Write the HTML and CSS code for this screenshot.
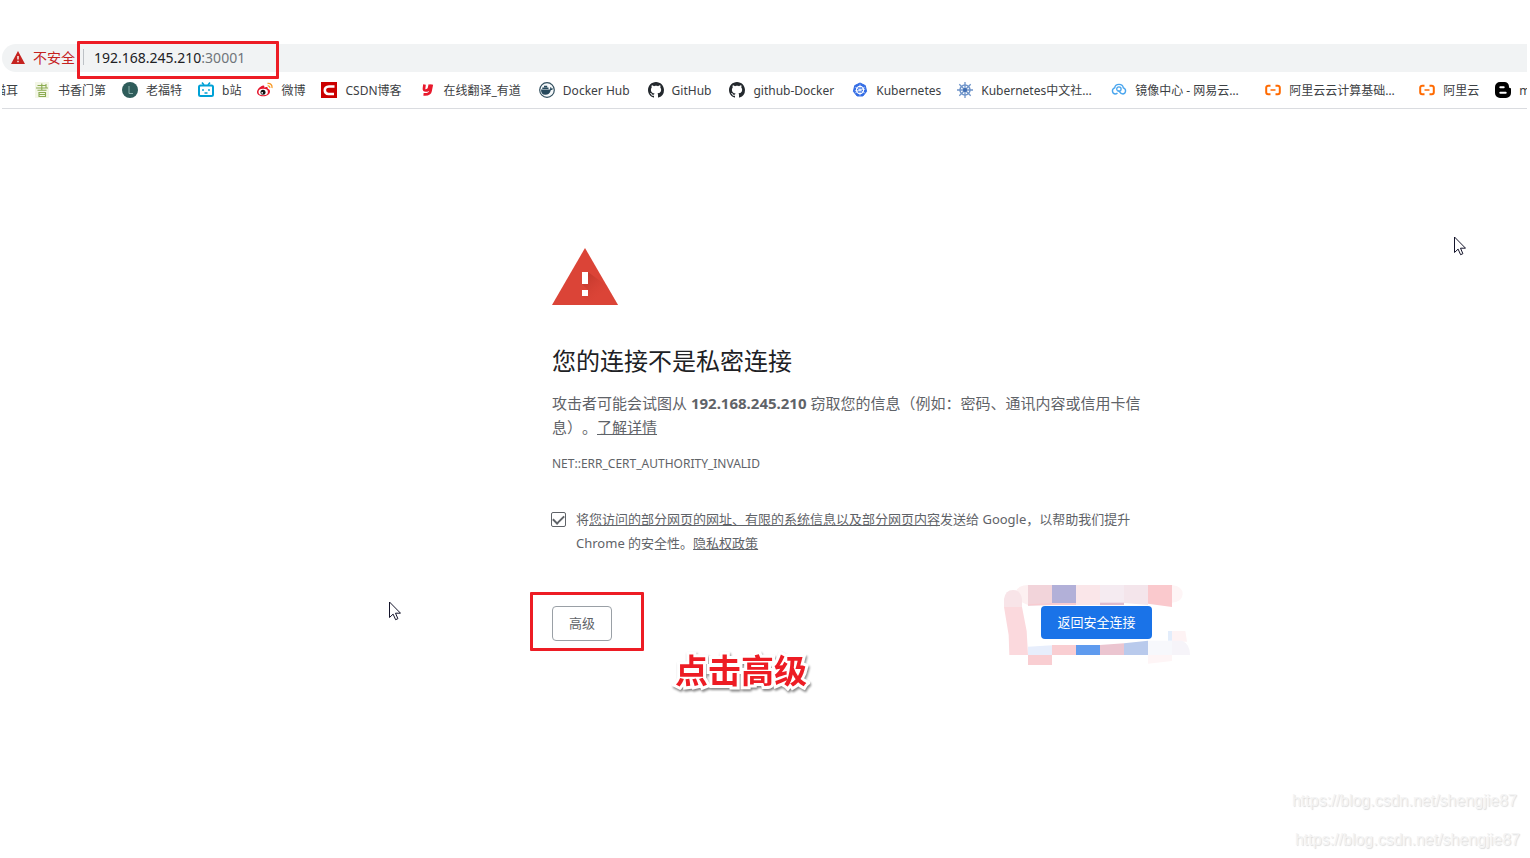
FILE: index.html
```html
<!DOCTYPE html>
<html lang="zh-CN">
<head>
  <meta charset="UTF-8">
  <meta name="viewport" content="width=device-width, initial-scale=1.0">
  <title>隐私设置错误</title>
  <link rel="stylesheet" href="styles.css">
</head>
<body>
  <header class="browser">
    <div class="omnibox">
      <svg class="warn" viewBox="0 0 14 13" width="14" height="13"><path d="M7 0L14 13H0z" fill="#c5221f"/><path d="M6.3 5h1.4v3.6H6.3zM6.3 9.8h1.4v1.4H6.3z" fill="#fff"/></svg>
      <span class="insecure">不安全</span>
      <span class="divider"></span>
      <span class="url">192.168.245.210<span class="port">:30001</span></span>
      <div class="mark mark-url"></div>
    </div>

    <nav class="bookmarks">
      <a href="#" class="bookmark first">猫耳</a>
      <a href="#" class="bookmark">
        <svg viewBox="0 0 16 16"><path fill="#f3f6e6" d="M1 0h14v16H1z"/><path d="M3.500 3.500h8.500M2 6h12M3.500 8.300h9M7.800 1.500v7M12 2v4.500M5 10.500h6.500v4H5zM5 12.500h6.500" fill="none" stroke="#8bab50" stroke-width="1.100"/></svg>
        <span>书香门第</span>
      </a>
      <a href="#" class="bookmark">
        <svg viewBox="0 0 16 16"><circle cx="8" cy="8" r="8" fill="#2f5d5b"/><path d="M7 4v7.500h4" fill="none" stroke="#8fb3ae" stroke-width="1"/></svg>
        <span>老福特</span>
      </a>
      <a href="#" class="bookmark">
        <svg viewBox="0 0 16 16"><rect x="1" y="3.500" width="14" height="10.500" rx="1.500" fill="#fff" stroke="#00a1d6" stroke-width="2"/><path d="M4 .5l2 2.500M12 .5l-2 2.500" stroke="#00a1d6" stroke-width="1.600"/><path d="M5 7v2M11 7v2M6.500 11h3" fill="none" stroke="#00a1d6" stroke-width="1.400"/></svg>
        <span>b站</span>
      </a>
      <a href="#" class="bookmark">
        <svg viewBox="0 0 16 16"><path d="M6.300 3.500c1-.2 1.300.7.900 2 2-.9 4-.7 3.600 1.200 1.600.4 2.200 1.500 2.200 2.800 0 2.800-3.200 4.800-6.800 4.800S0 12.500 0 10c0-2.700 3.800-6.200 6.300-6.500z" fill="#e6162d"/><ellipse cx="6.200" cy="10" rx="4.700" ry="3.200" fill="#fff"/><circle cx="6" cy="10.300" r="2.500" fill="#111"/><circle cx="5.200" cy="10.800" r=".9" fill="#fff"/><path d="M10.500 1.500c3-.5 5 1.700 4.400 4.500M10.700 3.900c1.400-.2 2.300.7 2 2" fill="none" stroke="#f79a28" stroke-width="1.300"/></svg>
        <span>微博</span>
      </a>
      <a href="#" class="bookmark roomy">
        <svg viewBox="0 0 16 16"><path fill="#c00" d="M0 0h16v16H0z"/><path d="M13.500 4.500H8C5 4.500 3.800 6.300 3.800 8.300S5 12 7.500 12H13" fill="none" stroke="#fff" stroke-width="2.600"/></svg>
        <span>CSDN博客</span>
      </a>
      <a href="#" class="bookmark roomy">
        <svg viewBox="0 0 16 16"><path d="M4.500 2.500L4 6.500c-.2 1.600.5 2 1.600 2 1.600 0 3.200-.6 3.500-2.500l.8-3.500M11.800 2.500L10.500 9c-.5 2.800-2.800 3.700-7 3.300" fill="none" stroke="#e8192c" stroke-width="2.700"/></svg>
        <span>在线翻译_有道</span>
      </a>
      <a href="#" class="bookmark roomy">
        <svg viewBox="0 0 16 16"><circle cx="8" cy="8" r="7.300" fill="#f5f8fa" stroke="#33505f" stroke-width="1.200"/><path d="M2 7.500h9c.4-1.200 0-2 .6-2.600.7.400 1 1 .9 1.600.6-.1 1.200 0 1.600.3-.4.900-1.200 1.200-2.200 1.200C11 11.300 9 12.800 6.300 12.800 3.500 12.800 1.900 11 2 7.500z" fill="#27495c"/><path d="M3.300 5.600h6.200v1.500H3.300zM5 3.800h3.200v1.500H5z" fill="#27495c"/></svg>
        <span>Docker Hub</span>
      </a>
      <a href="#" class="bookmark roomy">
        <svg viewBox="0 0 16 16"><path fill="#24292e" d="M8 0C3.580 0 0 3.580 0 8c0 3.540 2.290 6.530 5.470 7.590.4.070.55-.17.55-.38 0-.19-.01-.82-.01-1.490-2.010.37-2.530-.49-2.690-.94-.09-.23-.48-.94-.82-1.130-.28-.15-.68-.52-.01-.53.63-.01 1.080.58 1.230.82.72 1.210 1.870.87 2.330.66.07-.52.28-.87.51-1.070-1.780-.2-3.640-.89-3.640-3.950 0-.87.31-1.590.82-2.150-.08-.2-.36-1.020.08-2.120 0 0 .67-.21 2.200.82.640-.18 1.320-.27 2-.27s1.360.09 2 .27c1.530-1.040 2.200-.82 2.200-.82.440 1.100.160 1.920.080 2.120.510.560.820 1.270.820 2.150 0 3.070-1.870 3.750-3.650 3.950.290.250.540.730.540 1.480 0 1.070-.010 1.930-.010 2.200 0 .210.150.460.550.380A8.010 8.010 0 0016 8c0-4.420-3.580-8-8-8z"/></svg>
        <span>GitHub</span>
      </a>
      <a href="#" class="bookmark roomy">
        <svg viewBox="0 0 16 16"><path fill="#24292e" d="M8 0C3.580 0 0 3.580 0 8c0 3.540 2.290 6.530 5.470 7.590.4.070.55-.17.55-.38 0-.19-.01-.82-.01-1.490-2.010.37-2.530-.49-2.690-.94-.09-.23-.48-.94-.82-1.130-.28-.15-.68-.52-.01-.53.63-.01 1.080.58 1.230.82.72 1.210 1.870.87 2.330.66.07-.52.28-.87.51-1.070-1.780-.2-3.640-.89-3.640-3.950 0-.87.31-1.590.82-2.150-.08-.2-.36-1.020.08-2.120 0 0 .67-.21 2.200.82.640-.18 1.320-.27 2-.27s1.360.09 2 .27c1.530-1.040 2.200-.82 2.200-.82.440 1.100.160 1.920.080 2.120.510.560.820 1.270.820 2.150 0 3.070-1.870 3.750-3.650 3.950.290.250.540.730.540 1.480 0 1.070-.010 1.930-.010 2.200 0 .210.150.460.550.380A8.010 8.010 0 0016 8c0-4.420-3.580-8-8-8z"/></svg>
        <span>github-Docker</span>
      </a>
      <a href="#" class="bookmark">
        <svg viewBox="0 0 16 16"><path d="M8 1l5.300 2.600 1.300 5.800-3.700 4.600H5.100L1.400 9.400l1.300-5.800z" fill="#326ce5" stroke="#326ce5" stroke-linejoin="round"/><circle cx="8" cy="8" r="3.600" fill="none" stroke="#fff" stroke-width="1.100"/><path d="M8 2.500v11M3.300 5.200l9.400 5.600M12.700 5.200l-9.400 5.600M2.800 8.800l10.400-1.600" stroke="#fff" stroke-width=".7"/></svg>
        <span>Kubernetes</span>
      </a>
      <a href="#" class="bookmark long">
        <svg viewBox="0 0 16 16"><path d="M8 0v16M0 8h16M2.300 2.300l11.400 11.400M13.700 2.300L2.300 13.700" stroke="#6f94c9" stroke-width="1.300"/><circle cx="8" cy="8" r="5" fill="none" stroke="#6f94c9" stroke-width="1.500"/><circle cx="8" cy="8" r="2" fill="#3f6db3"/></svg>
        <span>Kubernetes中文社区文档</span>
      </a>
      <a href="#" class="bookmark long">
        <svg viewBox="0 0 16 16"><path d="M6.500 11C5.800 11.600 5 12 4 12a3.200 3.200 0 01-.3-6.200C4 3.700 5.700 2.400 8 2.400s4 1.300 4.300 3.400A3.200 3.200 0 0112 12c-2.500 0-3.300-2-4.500-3.600" fill="none" stroke="#49a5ee" stroke-width="1.400"/><circle cx="7.900" cy="7" r="2.200" fill="none" stroke="#49a5ee" stroke-width="1.300"/></svg>
        <span>镜像中心 - 网易云计算基础</span>
      </a>
      <a href="#" class="bookmark long">
        <svg viewBox="0 0 16 16"><path d="M5.500 3.700H3.200a2 2 0 00-2 2v4.600a2 2 0 002 2h2.300M10.500 3.700h2.300a2 2 0 012 2v4.600a2 2 0 01-2 2h-2.300" fill="none" stroke="#ff6a00" stroke-width="2"/><path d="M5.500 8h5" stroke="#ff6a00" stroke-width="1.500"/></svg>
        <span>阿里云云计算基础课程</span>
      </a>
      <a href="#" class="bookmark">
        <svg viewBox="0 0 16 16"><path d="M5.500 3.700H3.200a2 2 0 00-2 2v4.600a2 2 0 002 2h2.300M10.500 3.700h2.300a2 2 0 012 2v4.600a2 2 0 01-2 2h-2.300" fill="none" stroke="#ff6a00" stroke-width="2"/><path d="M5.500 8h5" stroke="#ff6a00" stroke-width="1.500"/></svg>
        <span>阿里云</span>
      </a>
      <a href="#" class="bookmark">
        <svg viewBox="0 0 16 16"><path d="M5 0h4.500a4.500 4.500 0 014.500 4.500c0 1.200.4 1.500 1.200 1.600.6.100.8.400.8 1V11a5 5 0 01-5 5H5a5 5 0 01-5-5V5a5 5 0 015-5z" fill="#000"/><path d="M5.300 5.200h3.400M5.300 10.800h5.400" stroke="#fff" stroke-width="2" stroke-linecap="round"/></svg>
        <span>m</span>
      </a>
    </nav>
  </header>

  <main class="interstitial">
    <svg class="icon" viewBox="0 0 66 57" width="66" height="57">
      <defs>
        <linearGradient id="shade" x1="0" y1="0" x2="1" y2="1">
          <stop offset="0" stop-color="#b93428"/>
          <stop offset=".6" stop-color="#db4437" stop-opacity="0.300"/>
        </linearGradient>
      </defs>
      <path d="M33 0L66 57H0z" fill="#db4437"/>
      <path d="M36 24L55 38 66 57H40L30 48l6-6-6-6z" fill="url(#shade)"/>
      <path d="M30 24h6v12h-6zM30 42h6v6h-6z" fill="#fff"/>
    </svg>
    <h1>您的连接不是私密连接</h1>
    <p class="message">攻击者可能会试图从 <strong>192.168.245.210</strong> 窃取您的信息（例如：密码、通讯内容或信用卡信息）。<a href="#">了解详情</a></p>
    <div class="code">NET::ERR_CERT_AUTHORITY_INVALID</div>

    <div class="opt-in">
      <input type="checkbox" id="report" checked>
      <label for="report">将<a href="#">您访问的部分网页的网址、有限的系统信息以及部分网页内容</a>发送给 Google，以帮助我们提升 Chrome 的安全性。<a href="#">隐私权政策</a></label>
    </div>

    <div class="buttons">
      <div class="spot">
        <button type="button" class="details">高级</button>
        <div class="mark mark-details"></div>
        <div class="hint">点击高级</div>
      </div>
      <div class="spot">
        <svg class="mosaic" viewBox="0 0 660 300" width="220" height="100">
          <path d="M78 50Q84 30 114 30V90L92 80z" fill="#fdf0f1"/>
          <path d="M114 30h72v60l-72 3z" fill="#f2d4da"/>
          <path d="M186 30h72v60h-72z" fill="#b2b0d8"/>
          <path d="M258 30h72v60h-72z" fill="#fae6e9"/>
          <path d="M330 30h72v60h-72z" fill="#f5ebf1"/>
          <path d="M330 83h72v7h-72z" fill="#dfbccd"/>
          <path d="M402 30h72v60l-72-6z" fill="#f4e5eb"/>
          <path d="M474 30h72v66l-72-10z" fill="#fac9cd"/>
          <path d="M114 88l72-4h72v6H114z" fill="#f8cbd0"/>
          <path d="M546 30q32 4 32 27t-32 26z" fill="#fef5f6"/>
          <path d="M42 96V72q4-27 27-27t27 27v24z" fill="#f8e4e8"/>
          <path d="M42 96h54l14 72 4 72H58l-2-60z" fill="#fbd9dd"/>
          <path d="M114 215l72-4v29h-72z" fill="#e7eefc"/>
          <path d="M186 210h72v30h-72z" fill="#f9ced2"/>
          <path d="M258 210h72v30h-72z" fill="#5f9bee"/>
          <path d="M330 210l72-5v35h-72z" fill="#ebc5d0"/>
          <path d="M402 205l72-8v43h-72z" fill="#b9caec"/>
          <path d="M114 240h72v30h-72z" fill="#f9ced2"/>
          <path d="M474 197h72v43h-72z" fill="#f7f8fc"/>
          <path d="M474 240h72v18l-72 8z" fill="#fef5f6"/>
          <path d="M534 168h12v29h-12z" fill="#e3edfb"/>
          <path d="M546 168h40l5 32h-45z" fill="#fef3f4"/>
          <path d="M546 197h30q24 10 24 43h-54z" fill="#f6f4f9"/>
        </svg>
        <button type="button" class="primary">返回安全连接</button>
      </div>
    </div>
  </main>

  <svg class="cursor cursor-right" viewBox="0 0 12 20" width="12" height="20"><path d="M.5 1v15.500l3.600-3.400 2.500 5.600 2.300-1-2.400-5.500h5z" fill="#fff" stroke="#14142a"/></svg>
  <svg class="cursor cursor-left" viewBox="0 0 12 20" width="12" height="20"><path d="M.5 1v15.500l3.600-3.400 2.500 5.600 2.300-1-2.400-5.500h5z" fill="#fff" stroke="#14142a"/></svg>

  <div class="watermark">
    <span>https://blog.csdn.net/shengjie87</span>
    <span class="lower">https://blog.csdn.net/shengjie87</span>
  </div>
</body>
</html>
```

FILE: styles.css
```css
* {
  box-sizing: border-box;
}
body {
  margin: 0;
  min-height: 100vh;
  position: relative;
  overflow-x: hidden;
  background: #fff;
  color: #5f6368;
  font-family: "Noto Sans", "Noto Sans CJK SC", sans-serif;
}
a {
  color: inherit;
}

/* browser chrome */
.browser {
  padding: 44px 3px 0 2px;
}
.omnibox {
  position: relative;
  display: flex;
  align-items: center;
  gap: 8px;
  height: 28px;
  padding: 0 0 2px 9px;
  border-radius: 14px 0 0 14px;
  background: #f1f3f4;
  font-size: 14px;
}
.insecure {
  color: #c5221f;
}
.divider {
  width: 1px;
  height: 16px;
  background: #bdc1c6;
}
.url {
  padding-left: 2px;
  color: #202124;
}
.port {
  color: #70757a;
}
.bookmarks {
  display: flex;
  align-items: center;
  gap: 16px;
  height: 37px;
  overflow: hidden;
  border-bottom: 1px solid #dadce0;
}
.bookmark {
  display: flex;
  flex: none;
  align-items: center;
  gap: 8px;
  color: #3c4043;
  font-size: 12px;
  text-decoration: none;
  white-space: nowrap;
}
.bookmark svg {
  width: 16px;
  height: 16px;
}
.bookmark.first {
  margin-left: -8px;
}
.bookmark.roomy {
  padding-right: 2px;
}
.bookmark.long span {
  width: 114px;
  overflow: hidden;
  text-overflow: ellipsis;
}

/* warning page */
.interstitial {
  width: 600px;
  margin: 139px auto 0;
  position: relative;
  left: 87px;
}
.icon {
  display: block;
}
h1 {
  margin: 40px 0 14px;
  color: #202124;
  font-size: 24px;
  font-weight: 400;
  line-height: 32px;
}
.message {
  margin: 0;
  font-size: 15px;
  line-height: 24px;
  text-spacing-trim: space-all;
}
.code {
  margin-top: 13px;
  font-size: 12px;
  line-height: 24px;
}
.opt-in {
  display: flex;
  gap: 10px;
  margin: 31px 0 0 -1px;
  font-size: 13px;
  line-height: 24px;
}
.opt-in input {
  appearance: none;
  flex: none;
  width: 15px;
  height: 15px;
  margin: 5px 0 0;
  border: 1px solid #5f6368;
  border-radius: 2px;
  display: grid;
  place-items: center;
}
.opt-in input:checked::before {
  content: "";
  width: 9px;
  height: 5px;
  margin-bottom: 3px;
  border: solid #5f6368;
  border-width: 0 0 2px 2px;
  transform: rotate(-45deg);
}
.buttons {
  display: flex;
  justify-content: space-between;
  align-items: flex-start;
  margin-top: 51px;
}
.spot {
  position: relative;
}
button {
  display: block;
  position: relative;
  padding: 0 16px;
  border: 0;
  border-radius: 4px;
  font: inherit;
  font-size: 13px;
  line-height: 33px;
}
.details {
  border: 1px solid #9aa0a6;
  background: #fff;
  color: #5f6368;
}
.primary {
  min-width: 111px;
  background: #1a73e8;
  color: #fff;
}

/* annotations */
.mark {
  position: absolute;
  border: 3px solid #ed1c24;
  border-radius: 1px;
}
.mark-url {
  left: 75px;
  top: -3px;
  width: 202px;
  height: 38px;
}
.mark-details {
  left: -22px;
  top: -14px;
  width: 114px;
  height: 59px;
}
.hint {
  position: absolute;
  left: 123px;
  top: 45px;
  color: #ed1c24;
  font-size: 33px;
  font-weight: 700;
  line-height: 40px;
  white-space: nowrap;
  -webkit-text-stroke: 6px #fff;
  paint-order: stroke fill;
  filter: drop-shadow(1px 2px 1px #888);
}
.mosaic {
  position: absolute;
  left: -51px;
  top: -31px;
}
.cursor {
  position: absolute;
}
.cursor-right {
  left: 1454px;
  top: 236px;
}
.cursor-left {
  left: 389px;
  top: 601px;
}
.watermark {
  position: absolute;
  right: 10px;
  bottom: 6px;
  display: grid;
  gap: 15px;
  color: #f4f4f4;
  font: 16px/24px "Liberation Sans", Arial, sans-serif;
  text-shadow: 1px 1px 1px #ddd;
}
.watermark span {
  padding-right: 3px;
}
.watermark .lower {
  padding: 0 0 0 3px;
}
```
